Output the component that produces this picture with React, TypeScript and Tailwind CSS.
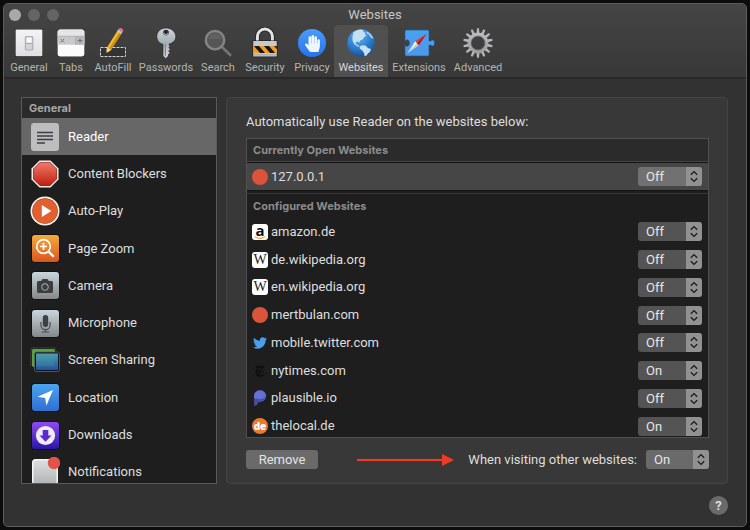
import React, { useState } from "react";
import { FaCamera, FaHandPaper, FaTwitter } from "react-icons/fa";
import { SiNewyorktimes } from "react-icons/si";

/* ---------- toolbar icons ---------- */

function GeneralIcon() {
  return (
    <svg width="32" height="32" viewBox="0 0 32 32" aria-hidden="true">
      <defs>
        <linearGradient id="gen" x1="0" y1="0" x2="0" y2="1">
          <stop offset="0" stopColor="#f4f4f6" />
          <stop offset="1" stopColor="#dedfe3" />
        </linearGradient>
      </defs>
      <rect x="2" y="2" width="28" height="28" rx="1.5" fill="#1c1c1c" />
      <rect x="2.6" y="2.6" width="26.8" height="26.6" rx="1" fill="url(#gen)" />
      <rect x="11.8" y="9" width="8.6" height="14.6" rx="1.5" fill="#aeb0b4" />
      <rect x="13" y="10.2" width="6.2" height="12.2" rx="0.8" fill="#d3d4d7" />
      <rect x="13.6" y="10.6" width="5" height="5.6" fill="#f8f8f9" />
      <path d="M13.4 16.4h5.4" stroke="#8c8d91" strokeWidth="0.8" />
    </svg>
  );
}

function TabsIcon() {
  return (
    <svg width="32" height="32" viewBox="0 0 32 32" aria-hidden="true">
      <rect x="2" y="2" width="28" height="28" rx="3" fill="#222" />
      <rect x="2.6" y="2.4" width="26.8" height="27" rx="2.6" fill="#fbfbfb" />
      <path d="M2.6 9.5V5a2.6 2.6 0 0 1 2.6-2.6h21.6A2.6 2.6 0 0 1 29.4 5v4.5z" fill="#e6e4e6" />
      <rect x="2.6" y="9.3" width="26.8" height="8.4" fill="#c9c8ca" />
      <rect x="20.6" y="9.3" width="8.8" height="8.4" fill="#b9b8ba" />
      <path d="M20.6 9.3v8.4M2.6 9.3h26.8" stroke="#a3a2a4" strokeWidth="0.7" />
      <path d="m5.6 11.8 3.6 3.6m0-3.6-3.6 3.6M25 11.2v4.8m-2.4-2.4h4.8" stroke="#6c6b6d" strokeWidth="0.9" />
    </svg>
  );
}

function AutoFillIcon() {
  return (
    <svg width="32" height="32" viewBox="0 0 32 32" aria-hidden="true">
      <rect x="3.5" y="20.5" width="25" height="9" fill="#333" stroke="#d0d0d0" strokeWidth="1" strokeDasharray="3 1" />
      <path d="M9.2 26.2 10 20.6 20.6 3.6l4.1 2.5L14 23z" fill="#f3bb2c" />
      <path d="m12 21.8 10.7-17 2 1.3L14 23z" fill="#d08d14" />
      <path d="m9.2 26.2.8-5.6 4 2.4z" fill="#eed2a4" />
      <path d="m9.2 26.2.3-2 1.3.8z" fill="#333" />
      <path d="m20 4.5 1.5-2.3 4.1 2.5-1.5 2.4z" fill="#bfc4c8" />
      <path d="m21.3 2.5.5-.8c1.4-1.8 5.3.5 4.3 2.5l-.7 1z" fill="#dd6f94" />
    </svg>
  );
}

function PasswordsIcon() {
  return (
    <svg width="32" height="32" viewBox="0 0 32 32" aria-hidden="true">
      <defs>
        <linearGradient id="key" x1="0" y1="0" x2="0" y2="1">
          <stop offset="0" stopColor="#cfd6da" />
          <stop offset=".5" stopColor="#a2adb4" />
          <stop offset="1" stopColor="#dfe3e5" />
        </linearGradient>
      </defs>
      <path
        d="M16 1C10.4 1 6.8 5 6.8 9.7c0 3.7 2.5 6.5 6.2 7.6v12l2.8 2.2 2.6-2.5v-1.6l1.8-1.6-1.6-1.8 1.8-1.7-1.6-1.8 1.6-1.3-1.4-1.3v-.8c4-1 6.8-3.7 6.8-7.4C25.8 5 21.6 1 16 1z"
        fill="url(#key)" stroke="#2a2a2a" strokeWidth=".7"
      />
      <circle cx="16" cy="5.6" r="2.8" fill="#27292a" />
      <path d="M15.4 17v12.5" stroke="#7e898f" strokeWidth="1.2" />
      <path d="M14 5.8a2 2 0 0 0 4 0" stroke="#eef1f2" fill="none" strokeWidth=".7" />
    </svg>
  );
}

function SearchIcon() {
  return (
    <svg width="32" height="32" viewBox="0 0 32 32" aria-hidden="true">
      <path d="m20 20 9 8.8" stroke="#757575" strokeWidth="2.6" />
      <circle cx="13" cy="13.2" r="9.2" fill="#565656" stroke="#858585" strokeWidth="2.4" />
      <path d="M6.5 12a6.6 6.6 0 0 1 13 0z" fill="#626262" />
    </svg>
  );
}

function SecurityIcon() {
  return (
    <svg width="32" height="32" viewBox="0 0 32 32" aria-hidden="true">
      <path d="M8.4 15V9.5a7.5 7.5 0 0 1 15 0V15" fill="none" stroke="#202020" strokeWidth="4.6" />
      <path d="M8.4 15V9.5a7.5 7.5 0 0 1 15 0V15" fill="none" stroke="#e1e3e4" strokeWidth="3" />
      <rect x="3.5" y="13.6" width="25" height="16.6" rx="1" fill="#1d1d1d" />
      <rect x="4.2" y="14" width="23.6" height="15.6" rx=".6" fill="#c7c9ca" />
      <rect x="4.2" y="19" width="23.6" height="7" fill="#f49b25" />
      <path d="M5 19h5l6 7h-5zM15 19h5l6 7h-5zM25 19h2.8v3.2z" fill="#1c1610" />
      <path d="M4.2 27.8h23.6" stroke="#98999a" strokeWidth=".8" />
    </svg>
  );
}

function PrivacyIcon() {
  return (
    <span className="flex size-7 items-center justify-center rounded-full bg-linear-to-b from-[#4a9cfb] to-[#2474ec] text-[#f0f5fb]">
      <FaHandPaper size={17} />
    </span>
  );
}

function GlobeIcon() {
  return (
    <svg width="32" height="32" viewBox="0 0 32 32" aria-hidden="true">
      <defs>
        <radialGradient id="sea" cx=".42" cy=".25" r=".8">
          <stop offset="0" stopColor="#69b4ee" />
          <stop offset=".55" stopColor="#2d7fce" />
          <stop offset="1" stopColor="#164a90" />
        </radialGradient>
      </defs>
      <circle cx="16" cy="16" r="13.8" fill="url(#sea)" />
      <path d="M8.5 5.2C11 3.3 13.5 2.6 16 2.5l2.8 1-.8 1.4 2.4.6-.6 1.9 2.2 1-2.6 1.4-1.8 2.6-2.6 1-.6 2.4-1.6-1.2-2 .6.1 2 2 .5 1.5 2.2-1.6-.3-3.4-2.3-1.8-3.6-.2-3.8z" fill="#c4e0f5" />
      <path d="M14.8 19.2l3.6-1.2 3 1.2 1.4 1.7 3.2 1-.9 2.9-2.2 1.6-1.3 2.2-2 .3-.6-3-1.7-2.5-2.6-2z" fill="#c4e0f5" />
      <path d="M21.5 4.2c3.3 1.5 5.6 4 6.9 7.3l-1.6.1-1.6-1.7-1.2-2.2-2.4-1.2z" fill="#a9d0ee" />
    </svg>
  );
}

function ExtensionsIcon() {
  return (
    <svg width="36" height="32" viewBox="0 0 36 32" aria-hidden="true">
      <defs>
        <linearGradient id="ext" x1="0" y1="0" x2="0" y2="1">
          <stop offset="0" stopColor="#48a2f0" />
          <stop offset="1" stopColor="#4d97e8" />
        </linearGradient>
      </defs>
      <path
        d="M5.500 3h21a1.500 1.500 0 0 1 1.500 1.500v9.500h2c.8-1.800 3.600-1.500 3.600 1.900s-2.800 3.900-3.600 2.100h-2v9.500a1.500 1.500 0 0 1-1.500 1.500h-21A1.500 1.500 0 0 1 4 27.500v-9h.6c1.200 1.700 3.800 1 3.800-2.400s-2.600-4.100-3.800-2.400H4V4.500A1.500 1.500 0 0 1 5.500 3z"
        fill="url(#ext)" stroke="#245485" strokeWidth=".6"
      />
      <path d="m25.500 6.700-11.300 7.500 3.600 4z" fill="#e2382e" />
      <path d="m6.800 25.800 7.400-11.600 3.600 4z" fill="#f2f4f6" />
      <path d="m6.800 25.800 9.200-9.600 1.800 2z" fill="#bfc6ce" />
      <path d="m25.500 6.700-9.500 9.500 1.800 2z" fill="#a91e1d" />
    </svg>
  );
}

const TEETH = Array.from({ length: 14 }, (_, i) => (i * 360) / 14);

function AdvancedIcon() {
  return (
    <svg width="32" height="32" viewBox="0 0 32 32" aria-hidden="true">
      <defs>
        <linearGradient id="gear" x1="0" y1="0" x2="0" y2="32" gradientUnits="userSpaceOnUse">
          <stop offset="0" stopColor="#c5c7c9" />
          <stop offset="1" stopColor="#8f9294" />
        </linearGradient>
      </defs>
      {TEETH.map((a) => (
        <path key={a} d="M14.500 7 15 1.200h2l.5 5.800z" fill="#b4b6b8" transform={`rotate(${a} 16 16)`} />
      ))}
      <circle cx="16" cy="16" r="8.6" fill="none" stroke="url(#gear)" strokeWidth="3.6" />
      <circle cx="16" cy="16" r="6.9" fill="none" stroke="#5a5c5e" strokeWidth=".8" />
    </svg>
  );
}

/* ---------- sidebar icons (30 px) ---------- */

function Tile({ className, children }: { className: string; children: React.ReactNode }) {
  return (
    <span className={`flex size-[27px] items-center justify-center rounded-[3px] shadow-[0_0_0_1px_#0f1216] ${className}`}>
      {children}
    </span>
  );
}

const readerIcon = (
  <span className="flex size-7 items-center justify-center rounded-[3px] bg-[#bdbdbf]">
    <svg width="28" height="28" viewBox="0 0 28 28" aria-hidden="true">
      <path d="M6 9.500h16M6 13h16M6 16.500h16M6 20h8" stroke="#3e3e40" strokeWidth="1.3" />
    </svg>
  </span>
);

const blockersIcon = (
  <svg width="30" height="30" viewBox="0 0 30 30" aria-hidden="true">
    <defs>
      <linearGradient id="stop" x1="0" y1="0" x2="0" y2="1">
        <stop offset="0" stopColor="#ee7a6a" />
        <stop offset="1" stopColor="#c1200f" />
      </linearGradient>
    </defs>
    <path d="M9.500 1.500h11l8 8v11l-8 8h-11l-8-8v-11z" fill="#f3f0ef" />
    <path d="M10 3h10l7 7v10l-7 7H10l-7-7V10z" fill="#8f2015" />
    <path d="M10.300 3.500h9.400l6.800 6.800v9.400l-6.800 6.800h-9.400l-6.800-6.800v-9.400z" fill="url(#stop)" />
  </svg>
);

const autoPlayIcon = (
  <svg width="30" height="30" viewBox="0 0 30 30" aria-hidden="true">
    <circle cx="15" cy="15" r="14.5" fill="#f5f3f1" />
    <circle cx="15" cy="15" r="12.8" fill="#a83a18" />
    <circle cx="15" cy="15" r="12.3" fill="#e2602f" />
    <path d="M11.800 9v12l9.600-6z" fill="#fff" />
  </svg>
);

const pageZoomIcon = (
  <Tile className="bg-linear-to-b from-[#f4ab3c] to-[#d9541e]">
    <svg width="27" height="27" viewBox="0 0 27 27" fill="none" stroke="#fff" aria-hidden="true">
      <circle cx="11.5" cy="11.5" r="6.8" strokeWidth="1.7" />
      <path d="m16.500 16.500 5.300 5.300" strokeWidth="2.3" />
      <path d="M11.500 8v7M8 11.500h7" strokeWidth="1.7" />
    </svg>
  </Tile>
);

const cameraIcon = (
  <Tile className="bg-linear-to-b from-[#c9d6de] to-[#85888a]">
    <FaCamera size={16} color="#3b3d3f" />
  </Tile>
);

const microphoneIcon = (
  <Tile className="bg-linear-to-b from-[#c9d6de] to-[#85888a]">
    <svg width="27" height="27" viewBox="0 0 27 27" aria-hidden="true">
      <rect x="10.8" y="5" width="5.4" height="12" rx="2.7" fill="#3f4244" />
      <path d="M8.900 12v3a4.600 4.600 0 0 0 9.200 0v-3M13.500 19.600V22M9.800 22h7.400" fill="none" stroke="#4b4e50" strokeWidth="1.2" />
    </svg>
  </Tile>
);

const screenSharingIcon = (
  <svg width="30" height="30" viewBox="0 0 30 30" aria-hidden="true">
    <defs>
      <linearGradient id="front" x1="0" y1="0" x2="0" y2="1">
        <stop offset="0" stopColor="#4a9fb4" />
        <stop offset="1" stopColor="#2351a0" />
      </linearGradient>
    </defs>
    <rect x="1.5" y="3.5" width="24" height="19" rx="2" fill="#55a53c" stroke="#111" />
    <path d="M1 21V5q0-2 2-2h21q2 0 2 2" fill="none" stroke="#555" strokeWidth=".7" />
    <rect x="4.5" y="7" width="25" height="19.5" rx="2" fill="#0b1220" stroke="#666" strokeWidth=".8" />
    <rect x="6" y="8.5" width="22" height="16.5" fill="url(#front)" />
    <path d="M6 8.500h18v13H6z" fill="#4aa58f" opacity=".25" />
  </svg>
);

const locationIcon = (
  <Tile className="bg-linear-to-b from-[#4ca4ef] to-[#2f6fd2]">
    <svg width="27" height="27" viewBox="0 0 27 27" aria-hidden="true">
      <path d="M21 6 5.500 12.800l7.700 1.200 1.200 7.600z" fill="#fff" />
    </svg>
  </Tile>
);

const downloadsIcon = (
  <Tile className="bg-linear-to-b from-[#8f4af2] to-[#2c14a6]">
    <svg width="27" height="27" viewBox="0 0 27 27" aria-hidden="true">
      <circle cx="13.5" cy="13.5" r="9.6" fill="#efecf8" />
      <path d="M10.700 8h5.600v5.500h3.200l-6 6.300-6-6.300h3.200z" fill="#5a2ad0" />
    </svg>
  </Tile>
);

const notificationsIcon = (
  <svg width="30" height="30" viewBox="0 0 30 30" aria-hidden="true">
    <defs>
      <linearGradient id="note" x1="0" y1="0" x2="0" y2="1">
        <stop offset="0" stopColor="#dcddde" />
        <stop offset="1" stopColor="#b1b3b5" />
      </linearGradient>
    </defs>
    <rect x="2" y="2" width="26" height="26" rx="3.5" fill="#f4f4f4" />
    <rect x="3.5" y="3.5" width="23" height="24" rx="2.5" fill="url(#note)" />
    <circle cx="24" cy="6" r="6.2" fill="#e0524a" />
  </svg>
);

/* ---------- favicons ---------- */

const redDot = <span className="size-4 rounded-full bg-[#d9543a]" />;

const wikipedia = (
  <span className="flex size-4 items-center justify-center rounded-[3px] bg-white font-['Liberation_Serif',serif] text-[14px] leading-4 text-[#222]">
    W
  </span>
);

const amazon = (
  <span className="relative flex size-4 justify-center rounded-[3px] bg-white font-['Open_Sans',sans-serif] text-[15px] leading-3 font-bold text-[#111]">
    a
    <svg className="absolute inset-0" width="16" height="16" viewBox="0 0 16 16" aria-hidden="true">
      <path d="M3 13c3 1.700 7 1.600 9.800-.1" fill="none" stroke="#f5a032" strokeWidth="1.1" strokeLinecap="round" />
    </svg>
  </span>
);

const plausible = (
  <svg width="16" height="16" viewBox="0 0 16 16" aria-hidden="true">
    <path d="M2 5C2.600 2 5 .3 8 .3c3.500 0 6 2.600 6 5.800s-2.600 5.700-6 5.700H6.300L2 8z" fill="#6470d4" />
    <path d="M6 11.800c4.400.2 8-2 8-5.700-1.500 2.400-4.300 3.300-8 3.200z" fill="#4150bd" />
    <path d="M2 8.800v7c2.500 0 4.500-1.700 4.500-4V8.800z" fill="#454d96" />
  </svg>
);

const theLocal = (
  <span className="flex size-4 items-center justify-center rounded-full bg-[#ec7a2b] font-['Open_Sans',sans-serif] text-[10px] leading-4 font-extrabold text-white">
    de
  </span>
);

/* ---------- data ---------- */

const TOOLS = [
  { name: "General", width: "w-[46px]", icon: <GeneralIcon /> },
  { name: "Tabs", width: "w-[38px]", icon: <TabsIcon /> },
  { name: "AutoFill", width: "w-[46px]", icon: <AutoFillIcon /> },
  { name: "Passwords", width: "w-[60px]", icon: <PasswordsIcon /> },
  { name: "Search", width: "w-[44px]", icon: <SearchIcon /> },
  { name: "Security", width: "w-[50px]", icon: <SecurityIcon /> },
  { name: "Privacy", width: "w-[44px]", icon: <PrivacyIcon /> },
  { name: "Websites", width: "w-[54px]", icon: <GlobeIcon /> },
  { name: "Extensions", width: "w-[62px]", icon: <ExtensionsIcon /> },
  { name: "Advanced", width: "w-[56px]", icon: <AdvancedIcon /> },
];

const SECTIONS = [
  { name: "Reader", icon: readerIcon },
  { name: "Content Blockers", icon: blockersIcon },
  { name: "Auto-Play", icon: autoPlayIcon },
  { name: "Page Zoom", icon: pageZoomIcon },
  { name: "Camera", icon: cameraIcon },
  { name: "Microphone", icon: microphoneIcon },
  { name: "Screen Sharing", icon: screenSharingIcon },
  { name: "Location", icon: locationIcon },
  { name: "Downloads", icon: downloadsIcon },
  { name: "Notifications", icon: notificationsIcon },
];

const SITES = [
  { host: "amazon.de", value: "Off", icon: amazon },
  { host: "de.wikipedia.org", value: "Off", icon: wikipedia },
  { host: "en.wikipedia.org", value: "Off", icon: wikipedia },
  { host: "mertbulan.com", value: "Off", icon: redDot },
  { host: "mobile.twitter.com", value: "Off", icon: <FaTwitter size={14} color="#4a9fec" /> },
  { host: "nytimes.com", value: "On", icon: <SiNewyorktimes size={12} color="#0f0f0f" /> },
  { host: "plausible.io", value: "Off", icon: plausible },
  { host: "thelocal.de", value: "On", icon: theLocal },
];

/* ---------- controls ---------- */

function Popup({ id, initial, tone, width }: { id: string; initial: string; tone: string; width: string }) {
  const [value, setValue] = useState(initial);
  return (
    <span className={`relative flex h-[19px] shrink-0 overflow-hidden rounded-[3px] ${width} ${tone}`}>
      <select
        id={id}
        value={value}
        onChange={(e) => setValue(e.target.value)}
        className="h-full w-full appearance-none bg-transparent pl-2 text-[13px] leading-[19px] text-[#e6e6e6] outline-none"
      >
        <option className="bg-[#323232]">Off</option>
        <option className="bg-[#323232]">On</option>
      </select>
      <span className="pointer-events-none absolute inset-y-0 right-0 flex w-4 items-center justify-center bg-[#919191]">
        <svg width="10" height="13" viewBox="0 0 10 13" fill="none" stroke="#1c1c1c" strokeWidth="1.3" aria-hidden="true">
          <path d="M1.800 4.800 5 1.600l3.200 3.200M1.800 8.200 5 11.400l3.200-3.200" />
        </svg>
      </span>
    </span>
  );
}

function SiteRow({ host, value, icon, tone }: { host: string; value: string; icon: React.ReactNode; tone: string }) {
  return (
    <div className="flex items-center gap-[3px] pr-1.5 pl-[5px]">
      <span className="flex size-4 shrink-0 items-center justify-center">{icon}</span>
      <label htmlFor={host} className="flex-1">{host}</label>
      <Popup id={host} initial={value} tone={tone} width="w-16" />
    </div>
  );
}

export default function App() {
  return (
    <div className="flex h-screen bg-[#0c0c0c] p-[3px] font-['Roboto','Liberation_Sans',sans-serif] text-[13px] leading-4 text-[#dedede]">
      <div className="flex min-w-0 flex-1 flex-col overflow-hidden rounded-[5px] border border-[#5c5c5c] bg-[#323232]">
        <header className="shrink-0 border-b-2 border-[#282828] bg-linear-to-b from-[#454545] to-[#383838]">
          <div className="grid h-[21px] grid-cols-3 items-center">
            <div className="flex gap-[7px] pl-[5px]">
              <span className="size-3 rounded-full bg-[#a9a9a9]" />
              <span className="size-3 rounded-full bg-[#646464]" />
              <span className="size-3 rounded-full bg-[#646464]" />
            </div>
            <h1 className="text-center text-[#c6c6c6]">Websites</h1>
          </div>
          <nav className="flex pl-0.5">
            {TOOLS.map((t) => (
              <button
                key={t.name}
                type="button"
                className={`flex h-[52px] shrink-0 flex-col items-center rounded-t-[4px] pt-0.5 text-[11px] leading-[17px] whitespace-nowrap ${t.width} ${
                  t.name === "Websites" ? "bg-[#505050] text-[#d6d6d6]" : "text-[#b4b4b4]"
                }`}
              >
                <span className="flex h-8 items-center">{t.icon}</span>
                {t.name}
              </button>
            ))}
          </nav>
        </header>

        <main className="flex min-h-0 flex-1 gap-[9px] pt-[18px] pr-[18px] pl-[17px]">
          <aside className="w-[196px] shrink-0 overflow-hidden border border-[#5a5a5a] bg-[#1e1e1e]">
            <h2 className="h-5 bg-[#2b2b2b] pl-[7px] font-['Inter',sans-serif] text-[11px] leading-5 font-bold text-[#a6a6a6]">General</h2>
            <ul className="grid h-[373px] auto-rows-fr">
              {SECTIONS.map((s) => (
                <li key={s.name} className={s.name === "Reader" ? "bg-[#676767] text-white" : ""}>
                  <button type="button" className="flex h-full w-full items-center gap-2 pl-2 text-left">
                    <span className="flex w-[30px] shrink-0 justify-center">{s.icon}</span>
                    {s.name}
                  </button>
                </li>
              ))}
            </ul>
          </aside>

          <section className="flex min-w-0 flex-1 flex-col rounded-[4px] border border-[#454545] bg-[#383838] pt-4 pr-[18px] pb-3.5 pl-[19px]">
            <p>Automatically use Reader on the websites below:</p>
            <div className="mt-2 min-h-0 flex-1 overflow-hidden border border-[#505050] bg-[#1e1e1e]">
              <h3 className="h-[23px] border-b border-[#454545] bg-[#2b2b2b] pl-1.5 font-['Inter',sans-serif] text-[11px] leading-[23px] font-bold text-[#8c8c8c]">
                Currently Open Websites
              </h3>
              <div className="grid h-[29px] border-y border-[#141414] bg-[#464646]">
                <SiteRow host="127.0.0.1" value="Off" icon={redDot} tone="bg-[#717171]" />
              </div>
              <h3 className="mt-0.5 h-[25px] border-t border-[#383838] pl-1.5 font-['Inter',sans-serif] text-[11px] leading-[25px] font-bold text-[#8c8c8c]">
                Configured Websites
              </h3>
              <div className="grid h-[222px] auto-rows-fr">
                {SITES.map((s) => (
                  <SiteRow key={s.host} {...s} tone="bg-[#545454]" />
                ))}
              </div>
            </div>
            <div className="mt-3 flex items-center">
              <button type="button" className="h-[19px] w-[72px] rounded-[3px] bg-[#6a6a6a] leading-[19px] text-[#e4e4e4]">
                Remove
              </button>
              <span className="flex min-w-0 flex-1 justify-end pr-3.5">
                <svg width="98" height="14" viewBox="0 0 98 14" aria-hidden="true">
                  <path d="M1 7h86" stroke="#12393a" strokeWidth="4" />
                  <path d="M1 7h86" stroke="#ee3b23" strokeWidth="2.4" />
                  <path d="M86 1v12l12-6z" fill="#ee3b23" />
                </svg>
              </span>
              <label htmlFor="others" className="pr-[9px]">When visiting other websites:</label>
              <Popup id="others" initial="On" tone="bg-[#6a6a6a]" width="w-[63px]" />
            </div>
          </section>
        </main>

        <footer className="flex shrink-0 justify-end pt-3 pr-[18px] pb-[11px]">
          <button type="button" aria-label="Help" className="size-[19px] rounded-full bg-[#6a6a6a] text-[13px] leading-[19px] font-semibold text-[#e4e4e4]">
            ?
          </button>
        </footer>
      </div>
    </div>
  );
}
